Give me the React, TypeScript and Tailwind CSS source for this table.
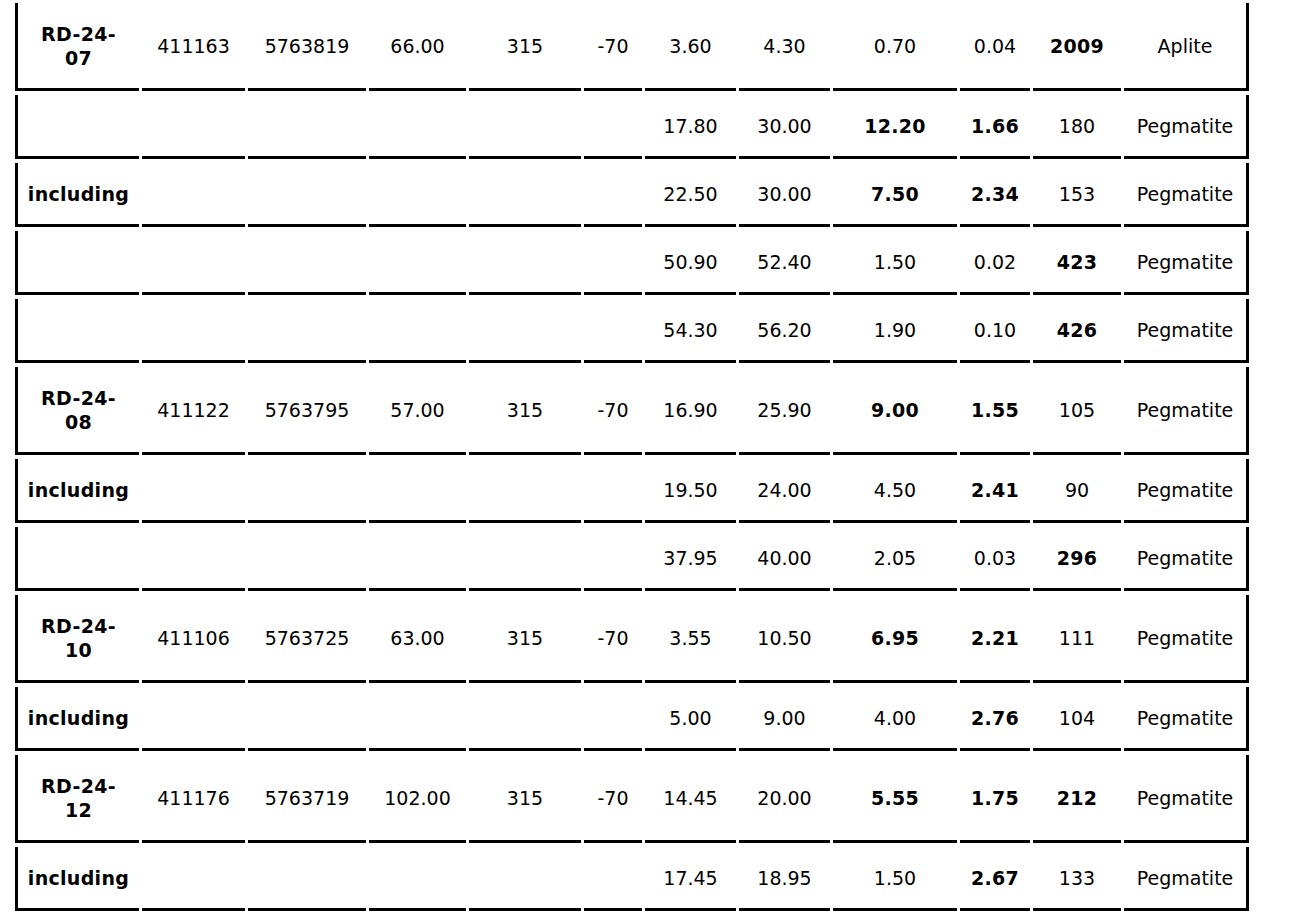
import React from 'react';

type Cell = string | { v: string; b?: boolean };

interface Row {
  hole?: string;
  label?: string;
  cells: Cell[];
}

// easting, northing, length, azimuth, dip, from, to, interval, Li2O, Ta, rock
const rows: Row[] = [
  {
    hole: 'RD-24-07',
    cells: ['411163', '5763819', '66.00', '315', '-70', '3.60', '4.30', '0.70', '0.04', { v: '2009', b: true }, 'Aplite'],
  },
  { cells: ['', '', '', '', '', '17.80', '30.00', { v: '12.20', b: true }, { v: '1.66', b: true }, '180', 'Pegmatite'] },
  { label: 'including', cells: ['', '', '', '', '', '22.50', '30.00', { v: '7.50', b: true }, { v: '2.34', b: true }, '153', 'Pegmatite'] },
  { cells: ['', '', '', '', '', '50.90', '52.40', '1.50', '0.02', { v: '423', b: true }, 'Pegmatite'] },
  { cells: ['', '', '', '', '', '54.30', '56.20', '1.90', '0.10', { v: '426', b: true }, 'Pegmatite'] },
  {
    hole: 'RD-24-08',
    cells: ['411122', '5763795', '57.00', '315', '-70', '16.90', '25.90', { v: '9.00', b: true }, { v: '1.55', b: true }, '105', 'Pegmatite'],
  },
  { label: 'including', cells: ['', '', '', '', '', '19.50', '24.00', '4.50', { v: '2.41', b: true }, '90', 'Pegmatite'] },
  { cells: ['', '', '', '', '', '37.95', '40.00', '2.05', '0.03', { v: '296', b: true }, 'Pegmatite'] },
  {
    hole: 'RD-24-10',
    cells: ['411106', '5763725', '63.00', '315', '-70', '3.55', '10.50', { v: '6.95', b: true }, { v: '2.21', b: true }, '111', 'Pegmatite'],
  },
  { label: 'including', cells: ['', '', '', '', '', '5.00', '9.00', '4.00', { v: '2.76', b: true }, '104', 'Pegmatite'] },
  {
    hole: 'RD-24-12',
    cells: ['411176', '5763719', '102.00', '315', '-70', '14.45', '20.00', { v: '5.55', b: true }, { v: '1.75', b: true }, { v: '212', b: true }, 'Pegmatite'],
  },
  { label: 'including', cells: ['', '', '', '', '', '17.45', '18.95', '1.50', { v: '2.67', b: true }, '133', 'Pegmatite'] },
];

const cellBase =
  'flex items-center justify-center text-center border-b-[3px] border-black py-[18.5px] px-2 leading-[24px]';

const App: React.FC = () => {
  return (
    <div className="min-h-screen bg-white text-black pt-[3px] pl-[15px]" style={{ fontFamily: '"DejaVu Sans", Verdana, sans-serif' }}>
      <div className="grid grid-cols-[124px_103px_118px_97px_112px_58px_91px_91px_124px_70px_88px_125px] gap-x-[3px] gap-y-[4px] text-[19px]">
        {rows.map((row, i) => (
          <React.Fragment key={i}>
            {/* Hole ID / including */}
            <div className={`${cellBase} border-l-[3px] font-bold tracking-[0.3px]`}>
              {row.hole ? (
                <span>
                  {row.hole.slice(0, 6)}
                  <br />
                  {row.hole.slice(6)}
                </span>
              ) : (
                row.label ?? ''
              )}
            </div>
            {row.cells.map((c, j) => {
              const v = typeof c === 'string' ? c : c.v;
              const b = typeof c === 'string' ? false : !!c.b;
              const last = j === row.cells.length - 1;
              return (
                <div key={j} className={`${cellBase} ${last ? 'border-r-[3px]' : ''} ${b ? 'font-bold tracking-[0.3px]' : ''}`}>
                  {v}
                </div>
              );
            })}
          </React.Fragment>
        ))}
      </div>
    </div>
  );
};

export default App;
